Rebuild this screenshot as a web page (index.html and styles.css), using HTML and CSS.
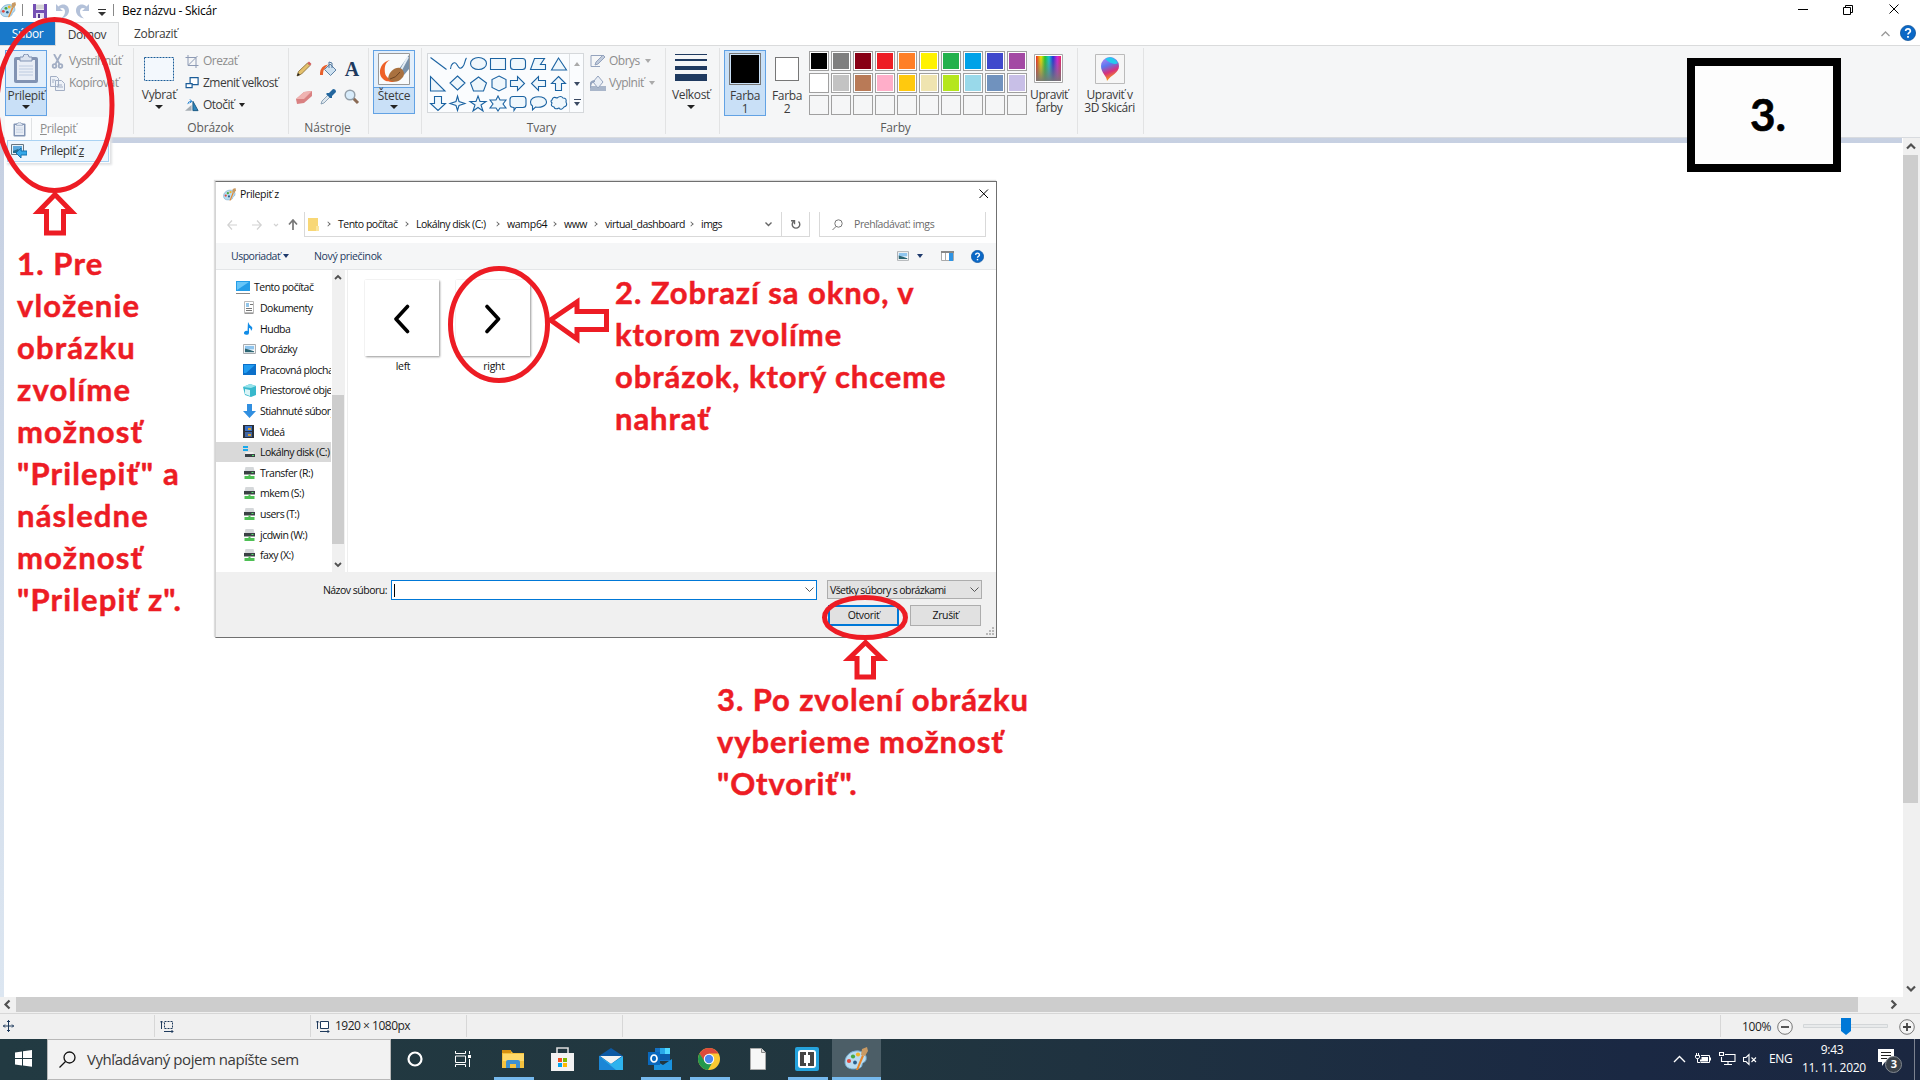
FILE: index.html
```html
<!DOCTYPE html>
<html lang="sk">
<head>
<meta charset="utf-8">
<title>Bez názvu - Skicár</title>
<link rel="stylesheet" href="styles.css">
</head>
<body>
<svg class="defs" width="0" height="0">
  <defs>
    <linearGradient id="rainbow"><stop offset="0" stop-color="#e22"/><stop offset=".2" stop-color="#f4e400"/><stop offset=".36" stop-color="#1fc72c"/><stop offset=".52" stop-color="#11c9d8"/><stop offset=".68" stop-color="#2130d8"/><stop offset=".85" stop-color="#d322dc"/><stop offset="1" stop-color="#ee2060"/></linearGradient>
    <linearGradient id="fadeGrey" x2="0" y2="1"><stop offset="0" stop-color="#777" stop-opacity="0"/><stop offset="1" stop-color="#777" stop-opacity=".95"/></linearGradient>
    <linearGradient id="drop" x1="0.2" x2=".5" y1="0" y2="1"><stop offset="0" stop-color="#b884f0"/><stop offset=".35" stop-color="#5a78f0"/><stop offset=".65" stop-color="#d8307c"/><stop offset="1" stop-color="#ffb000"/></linearGradient>
    <symbol id="paint" viewBox="0 0 24 24">
      <path d="M1 15C1 8 8 3 15 4c6 1 8 5 7 9-1 3-4 2-4 5 0 3-4 4-9 4-4 0-8-2-8-7z" fill="#b9dcf1" stroke="#6fa7cb"/>
      <circle cx="5" cy="14" r="2.1" fill="#e0483e"/><circle cx="9" cy="9.500" r="2.1" fill="#46a944"/><circle cx="14" cy="7.500" r="2.1" fill="#f0b429"/><circle cx="11" cy="15.500" r="1.900" fill="#2b5f8c"/>
      <path d="M12 23L18 8l2 1-6 14z" fill="#e8862a"/><path d="M17 8l1-6 5-2 1 4-3 5z" fill="#c99a63"/>
    </symbol>
    <symbol id="clip" viewBox="0 0 26 30">
      <rect x="1" y="3" width="24" height="26" rx="2" fill="#8193b3"/><rect x="4" y="6" width="18" height="20" fill="#e9eef6"/>
      <path d="M6 12h14M6 15h14M6 18h14M6 21h14" stroke="#bccadf"/><path d="M7 3h3q0-3 3-3t3 3h3v4H7z" fill="#dbe3ef" stroke="#8193b3"/>
    </symbol>
    <symbol id="drive" viewBox="0 0 12 12"><path d="M2 0h8l1 4H1z" fill="#d5d8da"/><path d="M.5 4h11v3.500H.5z" fill="#3b4145"/><path d="M8 5h2v1H8z" fill="#52e36b"/><path d="M5 7.500h2V9h4v3H1V9h4z" fill="#4fbf55"/></symbol>
    <symbol id="pic" viewBox="0 0 14 11"><path d="M.5.5h13v10H.5z" fill="#fff" stroke="#9a9fa3"/><path d="M2 2h10v4H2z" fill="#8fc5ee"/><path d="M2 5l4 1 6 2v1H2z" fill="#2b6573"/></symbol>
    <symbol id="help" viewBox="0 0 16 16"><circle cx="8" cy="8" r="7.600" fill="#0b68c6" stroke="#0a4d94" stroke-width=".7"/><path d="M5.600 6Q5.800 3.800 8 3.800T10.400 6C10.400 7.600 8 7.700 8 9.500" fill="none" stroke="#fff" stroke-width="1.700"/><path d="M7.100 11h1.800v1.700H7.100z" fill="#fff"/></symbol>
  </defs>
</svg>

<header class="titlebar">
  <svg class="app" width="16" height="16"><use href="#paint"/></svg>
  <i class="tsep s1"></i>
  <svg class="save" width="14" height="14" viewBox="0 0 14 14"><path d="M0 0h14v14H0z" fill="#7450b4"/><path d="M3 0h8v6H3z" fill="#eee"/><path d="M3 2h8M3 4h8" stroke="#bbb"/><path d="M3 9h8v5H3z" fill="#e4dff0"/><path d="M5 10h2v4H5z" fill="#51388a"/></svg>
  <svg class="undo" width="14" height="15" viewBox="0 0 14 15"><path d="M1 0v7h7L5 4.500C8 3 10 5 10 7.500s-1 4.500-4 7c5-1 8-4 8-8C14 1 8-1.500 3.500 2.500z" fill="#b3c1d9"/></svg>
  <svg class="redo" width="14" height="15" viewBox="0 0 14 15"><path d="M13 0v7H6l3-2.500C6 3 4 5 4 7.500s1 4.500 4 7c-5-1-8-4-8-8C0 1 6-1.500 10.500 2.500z" fill="#b3c1d9"/></svg>
  <svg class="qdrop" width="8" height="7"><path d="M0 .5h8" stroke="#333"/><path d="M0 3h8L4 7z" fill="#333"/></svg>
  <i class="tsep s2"></i>
  <span class="doc">Bez názvu - Skicár</span>
  <svg class="winbtns" width="110" height="14" fill="none" stroke="#000"><path d="M4 7.500h10M49.500 5.500h7v7h-7zM51.500 5.500v-2h7v7h-2M95.500 2.500l9 9M104.500 2.500l-9 9"/></svg>
</header>
<nav class="tabs">
  <span class="tab file">Súbor</span><span class="tab home">Domov</span><span class="tab view">Zobraziť</span>
  <svg class="collapse" width="9" height="6"><path d="M.5 5l4-4 4 4" fill="none" stroke="#999" stroke-width="1.300"/></svg>
  <svg class="helpi" width="16" height="16"><use href="#help"/></svg>
</nav>

<section class="ribbon">
  <div class="group clipboard">
    <div class="body">
      <div class="big active"><div class="pic"><svg width="26" height="30"><use href="#clip"/></svg></div><div class="cap">Prilepiť<b class="dn"></b></div></div>
      <div class="col disabled">
        <div class="cmd"><svg width="15" height="15" viewBox="0 0 15 15" fill="none" stroke="#a2aec4" stroke-width="1.800"><path d="M4 0l5.500 10M11 0L5.500 10"/><circle cx="4.500" cy="12" r="1.800"/><circle cx="10.500" cy="12" r="1.800"/></svg><span class="t">Vystrihnúť</span></div>
        <div class="cmd"><svg width="15" height="15" viewBox="0 0 15 15" fill="#eef2f8" stroke="#a2aec4"><path d="M.5.5h6l2 2v8h-8zM5.500 4.500h6l3 3v7h-9z"/><path d="M2 4h3M2 6h2M7 9h5M7 11h6"/></svg><span class="t">Kopírovať</span></div>
      </div>
    </div>
  </div>
  <div class="group image">
    <div class="body">
      <div class="big"><div class="pic"><svg width="30" height="24"><rect x=".5" y=".5" width="29" height="23" fill="#f3f8fd" stroke="#1b5c98" stroke-dasharray="2 1"/></svg></div><div class="cap">Vybrať<b class="dn"></b></div></div>
      <div class="col">
        <div class="cmd disabled"><svg width="13" height="13" viewBox="0 0 13 13" fill="none" stroke="#8d9ab4"><path d="M2.500 0v10.500H13M0 2.500h10.500V13M3 10L12 1"/></svg><span class="t">Orezať</span></div>
        <div class="cmd"><svg width="13" height="13" viewBox="0 0 13 13" fill="#fff" stroke="#1b5c98" stroke-width="1.200"><path d="M4.600 .6h8v7h-8z"/><path d="M.6 6.600h6v4h-6z"/></svg><span class="t">Zmeniť veľkosť</span></div>
        <div class="cmd"><svg width="15" height="13" viewBox="0 0 15 13"><path d="M0 12h7V6z" fill="#a5adb3"/><path d="M8.500 12V2L14 12z" fill="#2d86be" stroke="#195680"/><path d="M3 5Q3 2 7 2M5 0l2.500 2L5 4" fill="none" stroke="#1e7fd0"/></svg><span class="t">Otočiť</span><b class="dn"></b></div>
      </div>
    </div>
    <div class="label">Obrázok</div>
  </div>
  <div class="group tools">
    <div class="body">
      <svg width="16" height="16" viewBox="0 0 16 16"><path d="M1 15l1.500-4.500L11.500 2l2.500 2.500-8.500 8.500z" fill="#e4c06c" stroke="#80662d" stroke-width=".8"/><path d="M11.500 2l1.500-1.500 2.500 2.500L14 4.500z" fill="#d35c5a"/><path d="M1 15l1-3 2 2z" fill="#222"/></svg>
      <svg width="17" height="16" viewBox="0 0 17 16"><path d="M4.500 8.500L10 3l6 6-5.500 5.500z" fill="#cfe2f1" stroke="#5e82a6"/><path d="M9 7V1l3 1v5" fill="none" stroke="#50779d"/><path d="M0 14Q-.5 5 8 3.500L4.500 8Q3 9 3 14z" fill="#e8602c"/></svg>
      <span class="letter">A</span>
      <svg width="16" height="15" viewBox="0 0 16 15"><path d="M0 9l8-7 8-1v5l-8 7-7 1z" fill="#d98182"/><path d="M0 9l8-7 8-1-8 8z" fill="#efb3b1"/></svg>
      <svg width="16" height="16" viewBox="0 0 16 16"><path d="M1 15l1-3 6-6 2 2-6 6z" fill="#dfe8ef" stroke="#7690a8" stroke-width=".8"/><path d="M7 4l2 0 4-4q3 0 3 3l-4 4v2l-2 0-4-4z" fill="#23669e"/></svg>
      <svg width="16" height="16" viewBox="0 0 16 16"><path d="M9 9l5 5" stroke="#8a6a54" stroke-width="3"/><circle cx="6" cy="6" r="4.800" fill="#d8ecfb" stroke="#94a0aa" stroke-width="1.500"/></svg>
    </div>
    <div class="label">Nástroje</div>
  </div>
  <div class="group brushes">
    <div class="body">
      <div class="big active"><div class="pic"><svg width="32" height="32" viewBox="0 0 32 32"><path d="M.5.5h31v31H.5z" fill="#f9fbfc" stroke="#999"/><path d="M12 7C2 9-1 21 5 26c3 3 7 3 12 3-5-3-9-4-10-9C6 13 8 9 12 7z" fill="#ee6128"/><path d="M21 16L31 2v14l-5 6z" fill="#7790a9"/><path d="M23 17l7-13" stroke="#e4edf5" stroke-width="2"/><path d="M10 26c1-8 7-12 12-11 4 2 5 6 3 9-5 6-10 6-15 2z" fill="#a9713f"/><path d="M12 26q6-1 10-7" stroke="#6e4523" fill="none"/></svg></div><div class="cap">Štetce<b class="dn"></b></div></div>
    </div>
  </div>
  <div class="group shapes">
    <div class="body">
      <div class="gallery">
        <svg width="141" height="58" fill="#eff7fc" stroke="#1b63a2" stroke-width="1.100">
          <path d="M2.500 3.500l16 12" fill="none"/><path d="M22.500 15c0-5 4-8 6-5s3 6 6 3 2-7 4-9" fill="none"/><ellipse cx="50.500" cy="9.500" rx="8" ry="6"/><path d="M62.500 4.500h15v11h-15z"/><rect x="82.500" y="4.500" width="15" height="11" rx="3"/><path d="M106.500 4.500h10l-4 6h5v5h-15zM130.500 4l8 12h-15z"/>
          <path d="M2.500 22.500v14.500h14.500zM29.500 22l7.500 7-7.500 7-7.500-7zM50.500 23l8 6-3 8h-10l-3-8zM71 22l7 3.500v8L71 37l-7-3.500v-8zM82.500 26.500h7v-4l7 7-7 7v-4h-7zM117.500 26.500h-7v-4l-7 7 7 7v-4h7zM130.500 22.500l7 7h-4v7h-6v-7h-4z"/>
          <path d="M6.500 42.500h7v7h4l-7.500 7-7.500-7h4zM29.500 42l1.500 5.500 6 2-6 2-1.500 5-1.500-5-6-2 6-2zM50 42l2 5.500h6l-5 3.500 2 6-5-3.500-5 3.500 2-6-5-3.500h6zM70 42l2 4h6l-3 4 3 4h-6l-2 3-2-3h-6l3-4-3-4h6zM85 42.500h10q3 0 3 3v5q0 3-3 3h-7l-2 3v-3q-4 0-4-3v-5q0-3 3-3zM102.500 48c0-7 16-7 16 0 0 4-6 6-11 5l-3 3v-4q-2-1-2-4z"/><path d="M124 46q1-4 5-2 4-3 6 0 4 0 3 4 2 4-2 5-3 4-5 1-4 2-5-1-4-1-2-4-2-2 0-3z"/>
        </svg>
        <div class="gscroll"><b class="up"></b><b class="dn"></b><b class="dn line"></b></div>
      </div>
      <div class="col disabled">
        <div class="cmd"><svg width="16" height="14" viewBox="0 0 16 14" fill="none" stroke="#94a3bd"><path d="M12 1.500H1v11h9"/><path d="M5 11l1-3 7-7 2 2-7 7z" fill="#c0cbdc"/></svg><span class="t">Obrys</span><b class="dn"></b></div>
        <div class="cmd"><svg class="grey" width="16" height="16" viewBox="0 0 16 16"><path d="M0 11h16v5H0z" fill="#a9b6ca"/><path d="M3 7l5-6 5 6-5 6z" fill="#e9eef5" stroke="#94a3bd"/><path d="M0 13q0-7 5-7" fill="none" stroke="#94a3bd" stroke-width="2"/></svg><span class="t">Vyplniť</span><b class="dn"></b></div>
      </div>
    </div>
    <div class="label">Tvary</div>
  </div>
  <div class="group size">
    <div class="body">
      <div class="big"><div class="pic lines"><i class="l1"></i><i class="l2"></i><i class="l3"></i><i class="l4"></i></div><div class="cap">Veľkosť<b class="dn"></b></div></div>
    </div>
  </div>
  <div class="group colors">
    <div class="body">
      <div class="big active c1"><i class="swatch black"></i><span class="two">Farba<br>1</span></div>
      <div class="big c2"><i class="swatch white"></i><span class="two">Farba<br>2</span></div>
      <div class="palette">
        <i class="k1"></i><i class="k2"></i><i class="k3"></i><i class="k4"></i><i class="k5"></i><i class="k6"></i><i class="k7"></i><i class="k8"></i><i class="k9"></i><i class="k10"></i>
        <i class="k11"></i><i class="k12"></i><i class="k13"></i><i class="k14"></i><i class="k15"></i><i class="k16"></i><i class="k17"></i><i class="k18"></i><i class="k19"></i><i class="k20"></i>
        <i></i><i></i><i></i><i></i><i></i><i></i><i></i><i></i><i></i><i></i>
      </div>
      <div class="big edit"><svg width="30" height="30" viewBox="0 0 30 30"><path d="M.5.5h28v28H.5z" fill="#fff" stroke="#a9a9a9"/><path d="M2 2h25v25H2z" fill="url(#rainbow)"/><path d="M2 2h25v25H2z" fill="url(#fadeGrey)"/></svg><span class="two">Upraviť<br>farby</span></div>
    </div>
    <div class="label">Farby</div>
  </div>
  <div class="group p3d">
    <div class="body"><div class="big edit"><svg width="30" height="30" viewBox="0 0 30 30"><path d="M.5.500h29v29H.5z" fill="#f6f6f6" stroke="#bbb"/><path d="M12 27c0-5-6-8-6-15a9 9 0 0 1 18 0c0 7-8 9-12 15z" fill="url(#drop)"/><path d="M10 5q7-5 13 4-5 3-13-4z" fill="#25c9ee"/></svg><span class="two">Upraviť v<br>3D Skicári</span></div></div>
  </div>
</section>

<main class="work">
  <div class="canvas"></div>
  <div class="vscroll"><svg width="16" height="17"><path d="M4 10.500l4-4 4 4" fill="none" stroke="#505050" stroke-width="2.200"/></svg><i class="thumb"></i><svg width="16" height="17"><path d="M4 6.500l4 4 4-4" fill="none" stroke="#505050" stroke-width="2.200"/></svg></div>
</main>
<div class="hscroll"><svg width="16" height="15"><path d="M9.500 3.500l-4 4 4 4" fill="none" stroke="#505050" stroke-width="2.200"/></svg><i class="thumb"></i><svg class="r" width="16" height="15"><path d="M5.500 3.500l4 4-4 4" fill="none" stroke="#505050" stroke-width="2.200"/></svg></div>
<footer class="status">
  <div class="cell first"><svg width="11" height="12" viewBox="0 0 11 12" fill="none" stroke="#1e3a5c"><path d="M5.500 0v12M0 6h11M4 2l1.500-1.500L7 2M4 10l1.500 1.500L7 10M2 4.500L.5 6 2 7.500M9 4.500L10.500 6 9 7.500"/></svg></div>
  <div class="cell"><svg width="14" height="13" viewBox="0 0 14 13" fill="none" stroke="#1e3a5c"><path d="M4.500 1.500h8v7h-8z" stroke-dasharray="2 1"/><path d="M1.500 9V1M0 2.500L1.500 1 3 2.500M4 11.500h9M11.500 10l1.500 1.500-1.500 1.500"/></svg></div>
  <div class="cell"><svg width="14" height="13" viewBox="0 0 14 13" fill="none" stroke="#1e3a5c"><path d="M4.500 1.500h8v7h-8z" fill="#fff"/><path d="M1.500 9V1M0 2.500L1.500 1 3 2.500M4 11.500h9M11.500 10l1.500 1.500-1.500 1.500"/></svg><span class="dims">1920 × 1080px</span></div>
  <div class="cell"></div>
  <div class="cell wide"></div>
  <div class="zoom"><span>100%</span><svg width="16" height="16"><circle cx="8" cy="8" r="7.300" fill="#f4f4f4" stroke="#777"/><path d="M4 8h8" stroke="#444" stroke-width="1.800"/></svg>
    <svg class="track" width="86" height="18"><path d="M.5 6.500h84v3H.5z" fill="#e8eaeb" stroke="#d3d6d8"/><path d="M38 0h10v13l-5 4-5-4z" fill="#0078d7"/></svg>
    <svg width="16" height="16"><circle cx="8" cy="8" r="7.300" fill="#f4f4f4" stroke="#777"/><path d="M4 8h8M8 4v8" stroke="#444" stroke-width="1.800"/></svg></div>
</footer>

<div class="taskbar">
  <div class="start"><svg width="17" height="17" viewBox="0 0 17 17" fill="#fff"><path d="M0 2.500L7 1.400V8H0zM8 1.200L17 0v8H8zM0 9h7v6.400L0 14.500zM8 9h9v7.700l-9-1.200z"/></svg></div>
  <div class="search"><svg width="17" height="17" fill="none" stroke="#111" stroke-width="1.300"><circle cx="10.500" cy="6.500" r="5.500"/><path d="M6.500 10.500L.5 16.500"/></svg><span>Vyhľadávaný pojem napíšte sem</span></div>
  <div class="tb"><svg width="16" height="16"><circle cx="8" cy="8" r="6.500" fill="none" stroke="#fff" stroke-width="2.200"/></svg></div>
  <div class="tb tv"><svg width="16" height="16" fill="none" stroke="#fff"><path d="M.5 0v2.500h10V0M.5 5h10v6.500H.5zM.5 16v-2.500h10V16M14.500 0v3M14.500 8v8"/><path d="M13 4h3v3h-3z" fill="#fff" stroke="none"/></svg></div>
  <div class="tb run"><svg width="22" height="19" viewBox="0 0 22 19"><path d="M0 1h9l2 2h11v15H0z" fill="#f5c23e"/><path d="M0 0h9v3H0z" fill="#d79110"/><path d="M1 4h21v7H1z" fill="#ffd969"/><path d="M4 18v-6q0-2 2-2h10q2 0 2 2v6h-4v-4H8v4z" fill="#3c90d2"/></svg></div>
  <div class="tb"><svg width="23" height="24" viewBox="0 0 23 24"><path d="M6 6V1h11v5" fill="none" stroke="#ddd" stroke-width="1.600"/><path d="M0 6h23v18H0z" fill="#f2f2f2"/><path d="M7 11h4v4H7z" fill="#f25022"/><path d="M12 11h4v4h-4z" fill="#7fba00"/><path d="M7 16h4v4H7z" fill="#00a4ef"/><path d="M12 16h4v4h-4z" fill="#ffb900"/></svg></div>
  <div class="tb"><svg width="24" height="23" viewBox="0 0 24 23"><path d="M0 8l12-8 12 8v14H0z" fill="#0c59a4"/><path d="M1 8h22l-11 8z" fill="#f3f3f3"/><path d="M0 8l12 8L24 8v14H0z" fill="#2eb3ee"/><path d="M0 8l17 14H0z" fill="#1b86d6"/></svg></div>
  <div class="tb run"><svg width="24" height="22" viewBox="0 0 24 22"><path d="M7 0h15v13H7z" fill="#1472c4"/><path d="M12 0h5v6h-5z" fill="#28a8ea"/><path d="M17 0h5v6h-5z" fill="#50d9ff"/><path d="M12 6h10v6H12z" fill="#0b5cab"/><path d="M6 12l9 5 9-6v11H6z" fill="#1a93df"/><path d="M0 4h12v13H0z" fill="#0968bd"/><ellipse cx="6" cy="10.500" rx="3" ry="3.500" fill="none" stroke="#fff" stroke-width="1.700"/></svg></div>
  <div class="tb run"><svg width="22" height="22" viewBox="0 0 22 22"><circle cx="11" cy="11" r="11" fill="#fbc932"/><path d="M1.500 5.500A11 11 0 0 1 20.500 5.500H11L6.200 13.700z" fill="#dd4a3c"/><path d="M1.500 5.500A11 11 0 0 0 10 22l5-8.500-8 .5z" fill="#23984e"/><circle cx="11" cy="11" r="5.200" fill="#fff"/><circle cx="11" cy="11" r="4.200" fill="#4b86ef"/></svg></div>
  <div class="tb"><svg width="16" height="22"><path d="M.5.5h11l4 4v17H.5z" fill="#f7f7f7" stroke="#aaa"/><path d="M11.500.500v4h4" fill="#ddd" stroke="#888"/></svg></div>
  <div class="tb run"><svg width="24" height="24" viewBox="0 0 24 24"><rect width="24" height="24" rx="2" fill="#25a3dd"/><rect x="3" y="3" width="18" height="18" rx="3" fill="#fff"/><path d="M5 5h6v3H9v8h2v3H5zM13 5h6v14h-6v-3h2V8h-2z" fill="#444"/></svg></div>
  <div class="tb run current"><svg width="24" height="24"><use href="#paint"/></svg></div>
  <div class="tray">
    <svg width="13" height="8"><path d="M1 7l5.500-5.500L12 7" fill="none" stroke="#fff" stroke-width="1.400"/></svg>
    <svg class="bat" width="16" height="12" viewBox="0 0 16 12" fill="none" stroke="#fff"><path d="M6 2.500h8.500v7h-8.500"/><path d="M6.500 4h6.500v4.500H5V6.500h1.500zM15 4.500h1v3h-1z" fill="#fff" stroke="none"/><path d="M.5 2.500h4v2q0 1-2 1t-2-1zM1.500 0v2.500M3.500 0v2.500M2.500 5.500v4h3"/></svg>
    <svg class="net" width="17" height="15" viewBox="0 0 17 15" fill="none" stroke="#fff" stroke-width="1.100"><path d="M6 2.500h10v7H2.500V5M9 9.500v3M5 12.500h8M.5.500h4v3h-4z"/></svg>
    <svg class="vol" width="14" height="13" viewBox="0 0 14 13" fill="none" stroke="#fff" stroke-width="1.100"><path d="M.5 4.500H3l3-3v10l-3-3H.5zM8.500 4.500l4.500 4.500M13 4.500L8.500 9"/></svg>
    <span class="lang">ENG</span>
    <span class="clock">9:43<br>11. 11. 2020</span>
    <div class="notif"><svg width="25" height="25" viewBox="0 0 25 25"><path d="M1 1h16v13H8l-3 4v-4H1z" fill="#fff"/><path d="M4 4.500h10M4 7.500h10M4 10.500h6" stroke="#222"/><circle cx="16.500" cy="16.500" r="8" fill="#3a4149" stroke="#848a91"/></svg><b class="badge">3</b></div>
    <i class="peek"></i>
  </div>
</div>

<div class="menu">
  <div class="mi off"><svg width="13" height="15"><use href="#clip"/></svg><i></i><span class="t"><u>P</u>rilepiť</span></div>
  <div class="mi on"><svg width="16" height="14" viewBox="0 0 16 14"><path d="M.5.5h12v10H.5z" fill="#e8f2fa" stroke="#66747f"/><path d="M2 2h9v7H2z" fill="#5ba8dc"/><path d="M2 7l5-2 4 4H2z" fill="#246c8d"/><path d="M5 9l5-5v3h6v4h-6v3z" fill="#35a8e8" stroke="#1570ad"/></svg><i></i><span class="t">Prilepiť <u>z</u></span></div>
</div>

<div class="dialog">
  <div class="dtitle"><svg width="13" height="13"><use href="#paint"/></svg><span>Prilepiť z</span><svg class="x" width="10" height="10"><path d="M.5.5l8.500 8.500M9 .5L.5 9" stroke="#000"/></svg></div>
  <div class="dnav">
    <svg class="arrows" width="72" height="12" viewBox="0 0 72 12" fill="none" stroke="#d2d2d2" stroke-width="1.200"><path d="M10 6H1M5 1.500L.8 6 5 10.500M25 6h9M30 1.500L34.200 6 30 10.500M47 5l2 2 2-2"/><path d="M66 11V1.500M62 5.500L66 1l4 4.500" stroke="#777" stroke-width="1.700"/></svg>
    <div class="addr"><svg width="11" height="13"><path d="M0 0h10v9h1v4H0z" fill="#f8d776"/><path d="M8 8h3v5H8z" fill="#fbe59d"/></svg>
      <em></em><span class="w1">Tento počítač</span><em></em><span class="w2">Lokálny disk (C:)</span><em></em><span class="w3">wamp64</span><em></em><span class="w4">www</span><em></em><span class="w5">virtual_dashboard</span><em></em><span>imgs</span>
      <svg class="ad" width="7" height="5"><path d="M.5.5l3 3 3-3" fill="none" stroke="#666" stroke-width="1.400"/></svg></div>
    <div class="refresh"><svg width="10" height="11" fill="none" stroke="#666" stroke-width="1.400"><path d="M7.500 2.500a3.800 3.800 0 1 1-5 0M0 1.800h3.500v3.500"/></svg></div>
    <div class="find"><svg width="11" height="11" fill="none" stroke="#777"><circle cx="6.500" cy="4.500" r="3.700"/><path d="M4 7.500L.5 11"/></svg><span>Prehľadávať: imgs</span></div>
  </div>
  <div class="dtools"><span class="us">Usporiadať</span><b class="dn navy"></b><span class="nf">Nový priečinok</span>
    <svg class="v1" width="12" height="10"><use href="#pic"/></svg><b class="dn navy v2"></b>
    <svg class="v3" width="13" height="10"><path d="M.5.5h12v9H.5z" fill="#fff" stroke="#aaa"/><path d="M0 0h13v2H0z" fill="#888"/><path d="M4.500 2v8" stroke="#aaa"/><path d="M8 2h4v8H8z" fill="#2f94e4"/></svg>
    <svg width="13" height="13"><use href="#help"/></svg></div>
  <div class="dmain">
    <div class="tree">
      <div class="ti root"><svg width="14" height="13"><path d="M0 0h14v10H0z" fill="#249de8"/><path d="M1 1h12L1 9z" fill="#67c5f8"/><path d="M0 12.500h14" stroke="#888"/></svg><span>Tento počítač</span></div>
      <div class="ti"><svg width="12" height="13"><path d="M1.500.500h9v12h-9z" fill="#fff" stroke="#bbb"/><path d="M3 3h3M3 5h3" stroke="#258bd5" stroke-width="1.200"/><path d="M7 3.500h3M3 7.500h6M3 9.500h6M2 12h8" stroke="#777"/></svg><span>Dokumenty</span></div>
      <div class="ti"><svg width="12" height="13"><path d="M5 0q1 3 4 5 1 2-1 4 0-3-2-3v5a2.500 2 0 1 1-1.500-2z" fill="#118ce7"/></svg><span>Hudba</span></div>
      <div class="ti"><svg width="13" height="10"><use href="#pic"/></svg><span>Obrázky</span></div>
      <div class="ti"><svg width="13" height="11"><path d="M0 0h13v11H0z" fill="#0c70c9"/><path d="M1 1h11L3 9H1z" fill="#219cf0"/></svg><span>Pracovná plocha</span></div>
      <div class="ti"><svg width="13" height="13"><path d="M0 3l7-3 6 2v9l-5 2-6-2z" fill="#38b8cc"/><path d="M0 3l7-3 6 2-5 2z" fill="#96e3eb"/><path d="M2 5l5 1v6l-5-2z" fill="#d9f4f7"/></svg><span>Priestorové objekty</span></div>
      <div class="ti"><svg width="13" height="14"><path d="M4 0h5v7h4l-6.500 7L0 7h4z" fill="#318fe0"/></svg><span>Stiahnuté súbory</span></div>
      <div class="ti"><svg width="11" height="13"><path d="M0 0h11v13H0z" fill="#2b3038"/><path d="M2 1h7v5H2z" fill="#3a72c8"/><path d="M2 7h7v5H2z" fill="#4267a5"/><path d="M5 3h3v2H5zM5 9h3v2H5z" fill="#d5a032"/></svg><span>Videá</span></div>
      <div class="ti sel"><svg width="12" height="12"><path d="M0 0h5v2H0zM0 3h5v2H0z" fill="#17a9ec"/><path d="M3 6h7l1 2H2z" fill="#eee"/><path d="M2 8h10v3H2z" fill="#3b4145"/><path d="M9 9h2v1H9z" fill="#4be06a"/></svg><span>Lokálny disk (C:)</span></div>
      <div class="ti"><svg width="12" height="12"><use href="#drive"/></svg><span>Transfer (R:)</span></div>
      <div class="ti"><svg width="12" height="12"><use href="#drive"/></svg><span>mkem (S:)</span></div>
      <div class="ti"><svg width="12" height="12"><use href="#drive"/></svg><span>users (T:)</span></div>
      <div class="ti"><svg width="12" height="12"><use href="#drive"/></svg><span>jcdwin (W:)</span></div>
      <div class="ti"><svg width="12" height="12"><use href="#drive"/></svg><span>faxy (X:)</span></div>
    </div>
    <div class="tscroll"><svg width="12" height="14"><path d="M3 9l3-3 3 3" fill="none" stroke="#505050" stroke-width="1.800"/></svg><i></i><svg width="12" height="14"><path d="M3 5l3 3 3-3" fill="none" stroke="#505050" stroke-width="1.800"/></svg></div>
    <div class="files">
      <div class="fi"><div class="card"><svg width="18" height="30"><path d="M14.500 2.500L3 15 14.500 27.500" fill="none" stroke="#000" stroke-width="3.600" stroke-linecap="round" stroke-linejoin="round"/></svg></div><span>left</span></div>
      <div class="fi"><div class="card"><svg width="18" height="30"><path d="M3 2.500L14.500 15 3 27.500" fill="none" stroke="#000" stroke-width="3.600" stroke-linecap="round" stroke-linejoin="round"/></svg></div><span>right</span></div>
    </div>
  </div>
  <div class="dfoot">
    <span class="fl">Názov súboru:</span>
    <div class="finput"><i></i><svg width="9" height="6"><path d="M.5.500l4 4 4-4" fill="none" stroke="#555"/></svg></div>
    <div class="right"><div class="fsel"><span>Všetky súbory s obrázkami</span><svg width="9" height="6"><path d="M.5.500l4 4 4-4" fill="none" stroke="#555"/></svg></div>
      <div class="btns"><div class="btn def">Otvoriť</div><div class="btn">Zrušiť</div></div></div>
    <svg class="grip" width="8" height="8" fill="#b8b8b8"><path d="M6 0h2v2H6zM6 3h2v2H6zM3 3h2v2H3zM6 6h2v2H6zM3 6h2v2H3zM0 6h2v2H0z"/></svg>
  </div>
</div>

<svg class="marks" width="1920" height="1080" fill="none" stroke="#ed1c24" stroke-width="5">
  <ellipse cx="54.500" cy="105" rx="57.500" ry="85.500"/>
  <ellipse cx="499" cy="324.500" rx="48.500" ry="56"/>
  <ellipse cx="865" cy="617.500" rx="40.500" ry="20"/>
  <path d="M55 194.500L38.500 211.500h8v21.500h17v-21.500H71.500z"/>
  <path d="M550.500 320L577 302v9.500h29.500v18H577V339z"/>
  <path d="M865.500 642.500L849 658.500h8v18.500h16.500v-18.500h8.500z"/>
</svg>
<p class="note n1">1. Pre<br>vloženie<br>obrázku<br>zvolíme<br>možnosť<br>"Prilepiť" a<br>následne<br>možnosť<br>"Prilepiť z".</p>
<p class="note n2">2. Zobrazí sa okno, v<br>ktorom zvolíme<br>obrázok, ktorý chceme<br>nahrať</p>
<p class="note n3">3. Po zvolení obrázku<br>vyberieme možnosť<br>"Otvoriť".</p>
<div class="step">3.</div>
</body>
</html>
```
FILE: styles.css
```css
* { box-sizing: border-box; }
body { margin: 0; width: 1920px; height: 1080px; overflow: hidden; background: #fff; font: 12px/14px "Open Sans", "Noto Sans", sans-serif; letter-spacing: -0.35px; color: #1e1e1e; display: flex; flex-direction: column; position: relative; }
svg { display: block; flex: none; }
.defs { position: absolute; }
i { display: block; flex: none; }
.dn, .up { display: block; flex: none; width: 0; height: 0; border: 4px solid transparent; border-top-color: #222; border-bottom-width: 0; }
.up { border-top-width: 0; border-bottom: 4px solid #aaa; }
.navy { border-top-color: #1e3a6c; }
.disabled { color: #8d8d8d; }
.disabled .dn { border-top-color: #aaa; }

.titlebar { height: 22px; display: flex; align-items: center; flex: none; }
.app { margin-top: -2px; }
.tsep { width: 1px; height: 12px; background: #888; margin-top: -2px; }
.s1 { margin-left: 6px; }
.s2 { margin: -2px 8px 0 7px; }
.save { margin-left: 10px; }
.undo { margin-left: 8px; }
.redo { margin-left: 7px; }
.qdrop { margin-left: 8px; margin-top: 3px; }
.doc { color: #000; letter-spacing: -0.28px; }
.winbtns { margin-left: auto; margin-right: 16px; margin-top: -4px; }

.tabs { height: 24px; flex: none; display: flex; border-bottom: 1px solid #dadbdc; line-height: 23px; color: #3b3b3b; }
.file { width: 55px; background: #1979ca; color: #fff; text-align: center; }
.home { width: 64px; background: #f5f6f7; border: 1px solid #dadbdc; border-bottom: 0; height: 24px; text-align: center; }
.view { margin-left: 15px; }
.collapse { margin: 9px 10px 0 auto; }
.helpi { margin: 3px 4px 0 0; }

.ribbon { height: 92px; flex: none; background: #f5f6f7; border-bottom: 1px solid #d8dbdf; display: flex; padding-top: 2px; color: #3b3b3b; }
.group { height: 86px; border-right: 1px solid #e2e3e4; display: flex; flex-direction: column; }
.group .body { height: 73px; flex: none; display: flex; padding-top: 2px; }
.label { text-align: center; line-height: 13px; color: #5a5a5a; letter-spacing: -0.15px; }
.clipboard { width: 134px; padding-left: 5px; }
.image { width: 155px; padding-left: 4px; }
.image .label { padding-right: 5px; }
.tools { width: 80px; }
.tools .label { padding-right: 2px; }
.tools .body { padding-right: 1px; }
.brushes { width: 53px; padding-left: 4px; }
.shapes { width: 244px; padding-left: 5px; }
.shapes .label { padding-right: 9px; }
.size { width: 54px; padding-left: 4px; }
.colors { width: 358px; padding-left: 4px; }
.colors .label { padding-right: 10px; }
.p3d { width: 66px; }
.big { width: 42px; height: 66px; flex: none; display: flex; flex-direction: column; align-items: center; border: 1px solid transparent; }
.big .pic { height: 36px; display: flex; align-items: center; justify-content: center; }
.big .cap { width: 100%; flex: 1; display: flex; flex-direction: column; align-items: center; line-height: 16px; white-space: nowrap; }
.big .cap .dn { margin-top: 2px; }
.big.active { border-color: #62a2e4; background: #c9e0f7; }
.clipboard .active, .brushes .active { background: #e3effb; }
.active .cap { background: #c9e0f7; border-top: 1px solid #62a2e4; line-height: 15px; }
.brushes .big { height: 64px; }
.image .big { width: 42px; }
.col { display: flex; flex-direction: column; letter-spacing: -0.5px; }
.cmd { height: 22px; display: flex; align-items: center; white-space: nowrap; }
.cmd > svg { margin-right: 4px; }
.cmd .dn { margin-left: 5px; border-left-width: 3.5px; border-right-width: 3.5px; }
.clipboard .col { margin-left: 3px; }
.image .col { margin-left: 5px; }
.image .cmd > svg { width: 14px; margin-right: 4px; }
.tools .body { display: grid; grid-template-columns: repeat(3, 24px); grid-auto-rows: 28px; justify-content: center; align-content: start; justify-items: center; align-items: center; padding-top: 7px; }
.letter { font: bold 20px/20px "Liberation Serif", serif; color: #1e3a5f; letter-spacing: 0; }
.gallery { margin-top: 3px; width: 157px; height: 60px; border: 1px solid #d5d8db; background: #fafcfe; display: flex; }
.gscroll { border-left: 1px solid #dcdfe2; width: 14px; height: 58px; display: flex; flex-direction: column; align-items: center; padding-top: 8px; gap: 16px; }
.gscroll b { border-left-width: 3px; border-right-width: 3px; border-top-color: #3a4a63; }
.gscroll .up { border-top-color: transparent; border-bottom-color: #aaa; }
.gscroll .line { position: relative; }
.gscroll .line::before { content: ""; position: absolute; left: -3px; top: -7px; width: 7px; height: 1px; background: #3a4a63; }
.shapes .col { margin-left: 6px; }
.shapes .cmd > svg { margin-right: 3px; }
.lines { width: 32px; flex-direction: column; justify-content: flex-start !important; padding-top: 3px; }
.lines i { width: 32px; background: #1f3a60; }
.l1 { height: 1px; margin-bottom: 4px; } .l2 { height: 2px; margin-bottom: 5px; } .l3 { height: 4px; margin-bottom: 4px; } .l4 { height: 7px; }
.two { text-align: center; line-height: 13px; white-space: nowrap; }
.swatch { border: 1px solid #777; margin-top: 2px; }
.black { width: 32px; height: 32px; background: #000; box-shadow: inset 0 0 0 1px #c9e0f7; margin-bottom: 4px; }
.white { width: 24px; height: 24px; margin: 6px 0 8px; background: #fff; }
.palette { display: grid; grid-template-columns: repeat(10, 20px); grid-auto-rows: 20px; gap: 2px; align-content: start; margin: 1px 1px 0 1px; }
.palette i { border: 1px solid #a0a0a0; background: #f5f6f7; }
.palette i[class] { box-shadow: inset 0 0 0 1px #fff; }
.palette .k1 { background: #000; } .palette .k2 { background: #7f7f7f; } .palette .k3 { background: #880015; } .palette .k4 { background: #ed1c24; } .palette .k5 { background: #ff7f27; }
.palette .k6 { background: #fff200; } .palette .k7 { background: #22b14c; } .palette .k8 { background: #00a2e8; } .palette .k9 { background: #3f48cc; } .palette .k10 { background: #a349a4; }
.palette .k11 { background: #fff; } .palette .k12 { background: #c3c3c3; } .palette .k13 { background: #b97a57; } .palette .k14 { background: #ffaec9; } .palette .k15 { background: #ffc90e; }
.palette .k16 { background: #efe4b0; } .palette .k17 { background: #b5e61d; } .palette .k18 { background: #99d9ea; } .palette .k19 { background: #7092be; } .palette .k20 { background: #c8bfe7; }
.edit svg { margin: 3px 0 4px; }
.edit .two { letter-spacing: -0.45px; }
.p3d .edit { width: 63px; }

.work { height: 859px; flex: none; display: flex; background: linear-gradient(#c8d1e2 0, #c6d0e2 5px, #dce6f1 100%); }
.canvas { margin: 5px 0 0 4px; width: 1898px; background: #fff; }
.vscroll { width: 18px; background: #f0f0f0; border-left: 1px solid #fff; display: flex; flex-direction: column; }
.vscroll .thumb { width: 15px; height: 648px; background: #cdcdcd; margin-bottom: auto; }
.hscroll { height: 16px; flex: none; background: #f0f0f0; display: flex; }
.hscroll .thumb { width: 1842px; height: 15px; background: #cdcdcd; }
.hscroll .r { margin-left: 28px; }
.status { height: 26px; flex: none; background: #f0f0f0; border-top: 1px solid #d7d7d7; display: flex; color: #1e1e1e; }
.cell { width: 156px; border-right: 1px solid #d7d7d7; margin: 1px 0 2px; display: flex; align-items: center; padding-left: 5px; }
.cell.first { width: 155px; padding-left: 3px; }
.cell.wide { width: 1098px; }
.dims { margin-left: 5px; letter-spacing: -0.5px; }
.zoom { display: flex; align-items: center; padding-left: 21px; flex: 1; }
.zoom span { width: 35px; }
.track { margin: 0 10px; }

.taskbar { height: 41px; flex: none; display: flex; background: linear-gradient(90deg, #223a42, #21363f 45%, #1a2843 85%, #1b2740); color: #fff; }
.start { width: 47px; display: flex; align-items: center; justify-content: center; padding: 0 1px 2px 0; }
.search { width: 344px; background: #f2f2f2; border: 1px solid #b8b8b8; display: flex; align-items: center; color: #3a3a3a; font-size: 15px; letter-spacing: -0.45px; padding: 0 0 1px 11px; }
.search span { margin-left: 11px; white-space: nowrap; }
.tb { width: 49px; display: flex; align-items: center; justify-content: center; position: relative; padding: 0 1px 1px 0; }
.tv { padding-right: 3px; }
.run::after { content: ""; position: absolute; left: 5px; width: 40px; bottom: 0; height: 3px; background: #76b9ed; }
.current { background: #4c5e67; }
.current::after { left: 0; width: 49px; }
.tray { margin-left: auto; display: flex; align-items: center; padding-bottom: 1px; }
.bat { margin-left: 9px; } .net { margin-left: 8px; } .vol { margin-left: 7px; }
.lang { margin-left: 12px; width: 33px; letter-spacing: -0.4px; }
.clock { width: 60px; text-align: center; line-height: 18px; white-space: nowrap; letter-spacing: -0.3px; margin-top: -1px; }
.notif { position: relative; margin-left: 15px; margin-top: 3px; }
.badge { position: absolute; left: 9px; top: 9px; width: 16px; text-align: center; font-size: 11px; letter-spacing: 0; }
.peek { width: 1px; height: 41px; background: #7c828f; margin: 0 5px 0 12px; }

.menu { position: absolute; left: 5px; top: 117px; width: 105px; height: 46px; background: #fbfcfd; box-shadow: 2px 2px 2px #e0e2e4; padding: 1px; }
.mi { height: 22px; display: flex; align-items: center; padding-left: 7px; color: #8d8d8d; letter-spacing: -0.45px; }
.mi svg { width: 13px; }
.mi i { width: 1px; height: 22px; margin: 0 8px 0 5px; background: #e0e2e4; }
.mi.on { border: 1px solid #a9d2f3; background: #eef6fd; color: #333; margin-left: 1px; width: 102px; padding-left: 3px; }
.mi.on svg { width: 16px; }
.mi.on i { background: none; margin-left: 4px; }

.dialog { position: absolute; left: 215px; top: 181px; width: 782px; height: 457px; border: 1px solid #707070; border-left-color: #d4d4d4; background: #fff; box-shadow: -1px -1px 1px #ddd; display: flex; flex-direction: column; font-size: 10.5px; letter-spacing: -0.5px; color: #111; }
.dtitle { height: 30px; display: flex; align-items: center; padding: 0 7px 6px 7px; letter-spacing: -0.35px; }
.dtitle span { margin-left: 4px; }
.x { margin-left: auto; }
.dnav { height: 25px; display: flex; }
.arrows { margin: 7px 5px 0 11px; }
.addr, .refresh, .find { border: 1px solid #d9d9d9; border-top: 0; display: flex; align-items: center; }
.addr { width: 478px; padding-left: 3px; white-space: nowrap; }
.addr em { width: 4px; height: 4px; border: solid #666; border-width: 1px 1px 0 0; transform: rotate(45deg) scale(.9); margin: 0 8px 0 7px; flex: none; }
.w1 { width: 59px; } .w2 { width: 72px; } .w3 { width: 38px; } .w4 { width: 22px; } .w5 { width: 77px; }
.w3 { letter-spacing: -0.3px; }
.ad { margin-left: auto; margin-right: 9px; }
.refresh { width: 28px; border-left: 0; justify-content: center; }
.find { width: 167px; margin-left: 9px; padding-left: 12px; color: #6a6a6a; letter-spacing: -0.4px; }
.find span { margin-left: 11px; white-space: nowrap; }
.dtools { height: 27px; margin-top: 6px; background: #f5f6f7; border-bottom: 1px solid #e4e6e8; display: flex; align-items: center; padding: 0 12px 0 15px; color: #1e3a5f; letter-spacing: -0.35px; }
.us { width: 50px; letter-spacing: -0.5px; }
.dtools .dn { margin-left: 2px; border-left-width: 3.5px; border-right-width: 3.5px; }
.nf { margin-left: 25px; }
.v1 { margin-left: auto; }
.dtools .v2 { margin: 0 18px 0 8px; }
.v3 { margin-right: 17px; }
.dmain { height: 302px; display: flex; }
.tree { width: 115px; padding-top: 7px; overflow: hidden; }
.ti { height: 20.62px; display: flex; align-items: center; padding-left: 27px; white-space: nowrap; }
.ti span { margin-left: 4px; }
.ti svg { width: 13px; }
.root { padding-left: 20px; }
.root svg { width: 14px; }
.sel { background: #d9d9d9; }
.tscroll { width: 13px; margin-left: 1px; background: #f0f0f0; display: flex; flex-direction: column; }
.tscroll i { width: 12px; height: 149px; background: #cdcdcd; margin: 111px 0 auto; }
.files { border-left: 1px solid #eee; margin-left: 2px; padding: 10px 0 0 17px; display: flex; gap: 17px; }
.fi { width: 74px; text-align: center; line-height: 18px; letter-spacing: -0.3px; }
.card { height: 76px; background: #fff; box-shadow: 1px 1px 2px #999, 0 0 1px #ddd; display: flex; align-items: center; justify-content: center; padding-top: 1px; }
.fi span { display: block; margin-top: 1px; padding-left: 2px; }
.dfoot { flex: 1; background: #f0f0f0; display: flex; padding-top: 8px; position: relative; }
.fl { width: 171px; text-align: right; line-height: 20px; }
.finput { width: 426px; height: 20px; margin-left: 4px; background: #fff; border: 1px solid #0078d7; display: flex; align-items: center; justify-content: space-between; padding: 0 2px 0 2px; }
.finput i { width: 1px; height: 13px; background: #000; }
.right { margin-left: 10px; width: 155px; }
.fsel { height: 19px; border: 1px solid #adadad; background: #e2e2e2; display: flex; align-items: center; justify-content: space-between; padding: 0 2px 0 2px; white-space: nowrap; letter-spacing: -0.58px; }
.btns { display: flex; gap: 11px; padding: 6px 0 0 1px; letter-spacing: -0.35px; }
.btn { width: 71px; height: 21px; background: #e1e1e1; border: 1px solid #adadad; text-align: center; line-height: 18px; }
.def { border: 2px solid #0078d7; line-height: 16px; }
.grip { position: absolute; right: 2px; bottom: 2px; }

.marks { position: absolute; left: 0; top: 0; }
p.note { position: absolute; margin: 0; font: bold 31px/42px Lato, "Open Sans", sans-serif; letter-spacing: 0.92px; color: #ed1c24; -webkit-text-stroke: 0.5px #ed1c24; white-space: nowrap; }
p.n1 { left: 17px; top: 242px; letter-spacing: 1.15px; }
.n2 { left: 615px; top: 271px; }
.n3 { left: 717px; top: 678px; }
.step { position: absolute; left: 1687px; top: 58px; width: 154px; height: 114px; border: 8px solid #000; background: #fdfdfd; color: #000; font: bold 44px/97px Lato, "Open Sans", sans-serif; letter-spacing: 0; -webkit-text-stroke: 0.6px #000; padding-left: 55px; }
```
